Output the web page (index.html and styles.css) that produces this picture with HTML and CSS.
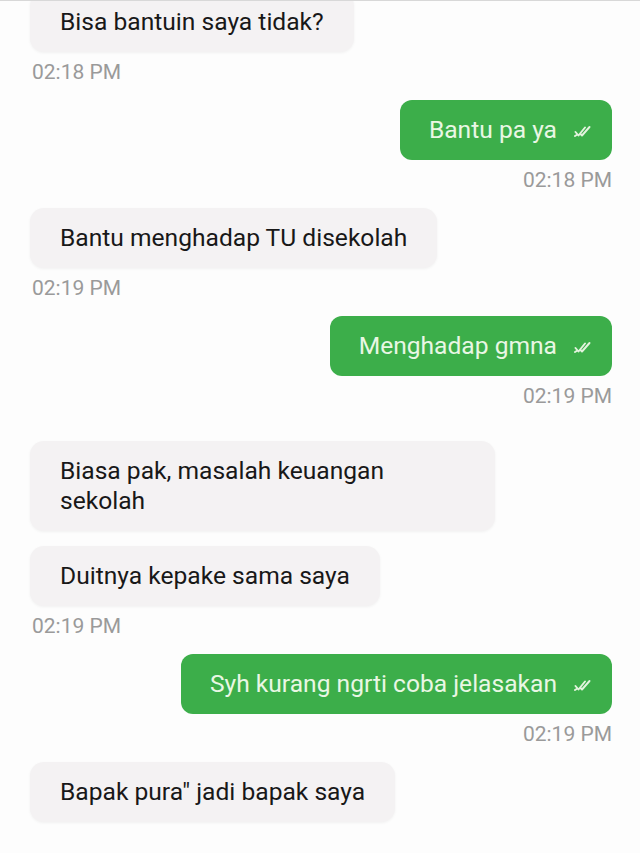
FILE: index.html
```html
<!DOCTYPE html>
<html lang="id">
<head>
<meta charset="utf-8">
<title>Chat</title>
<link rel="stylesheet" href="styles.css">
</head>
<body>
<div class="chat">
  <div class="msg in first">
    <div class="bubble">Bisa bantuin saya tidak?</div>
    <div class="time">02:18 PM</div>
  </div>
  <div class="msg out">
    <div class="bubble">Bantu pa ya <svg class="tick" viewBox="0 0 18 12"><path d="M1.5 7 L4.5 10.5 L11 2.5 M6.5 9 L8 10.5 L15.5 2 M3 9.8 L1 11"/></svg></div>
    <div class="time">02:18 PM</div>
  </div>
  <div class="msg in">
    <div class="bubble">Bantu menghadap TU disekolah</div>
    <div class="time">02:19 PM</div>
  </div>
  <div class="msg out">
    <div class="bubble">Menghadap gmna <svg class="tick" viewBox="0 0 18 12"><path d="M1.5 7 L4.5 10.5 L11 2.5 M6.5 9 L8 10.5 L15.5 2 M3 9.8 L1 11"/></svg></div>
    <div class="time">02:19 PM</div>
  </div>
  <div class="msg in gap">
    <div class="bubble wide">Biasa pak, masalah keuangan<br>sekolah</div>
  </div>
  <div class="msg in follow">
    <div class="bubble">Duitnya kepake sama saya</div>
    <div class="time">02:19 PM</div>
  </div>
  <div class="msg out">
    <div class="bubble">Syh kurang ngrti coba jelasakan <svg class="tick" viewBox="0 0 18 12"><path d="M1.5 7 L4.5 10.5 L11 2.5 M6.5 9 L8 10.5 L15.5 2 M3 9.8 L1 11"/></svg></div>
    <div class="time">02:19 PM</div>
  </div>
  <div class="msg in">
    <div class="bubble">Bapak pura" jadi bapak saya</div>
  </div>
</div>
</body>
</html>
```

FILE: styles.css
```css
html, body {
  margin: 0;
  padding: 0;
  background: #fdfdfd;
  overflow: hidden;
}
body {
  width: 640px;
  height: 853px;
  border-top: 1px solid #d8d8d8;
  box-sizing: border-box;
  font-family: Roboto, "Noto Sans", Arial, sans-serif;
  -webkit-font-smoothing: antialiased;
}
.chat {
  display: flex;
  flex-direction: column;
  padding: 0 28px 0 30px;
  margin-top: -9px;
}
.msg {
  display: flex;
  flex-direction: column;
  margin-top: 18px;
}
.msg.first { margin-top: 0; }
.msg.gap { margin-top: 35px; }
.msg.follow { margin-top: 15px; }
.msg.in { align-items: flex-start; }
.msg.out { align-items: flex-end; }
.bubble {
  box-sizing: border-box;
  min-height: 60px;
  padding: 15px 30px 15px 30px;
  font-size: 24.6px;
  line-height: 30px;
  border-radius: 14px;
  display: flex;
  align-items: center;
  white-space: nowrap;
}
.bubble.wide { width: 465px; display: block; }
.in .bubble {
  background: #f4f2f3;
  color: #181818;
  box-shadow: 0 1px 3px rgba(0,0,0,0.05);
}
.out .bubble {
  background: #3cae4a;
  color: #e9f7e4;
  padding-left: 29px;
  padding-right: 20px;
  border-radius: 12px;
}
.tick {
  width: 18px;
  height: 12px;
  margin-left: 17px;
  margin-top: 2px;
  fill: none;
  stroke: #e3f3de;
  stroke-width: 1.9;
  stroke-linecap: round;
  stroke-linejoin: round;
}
.time {
  margin-top: 10px;
  font-size: 21px;
  line-height: 20px;
  color: #9a9a9a;
  padding-left: 2px;
}
```
